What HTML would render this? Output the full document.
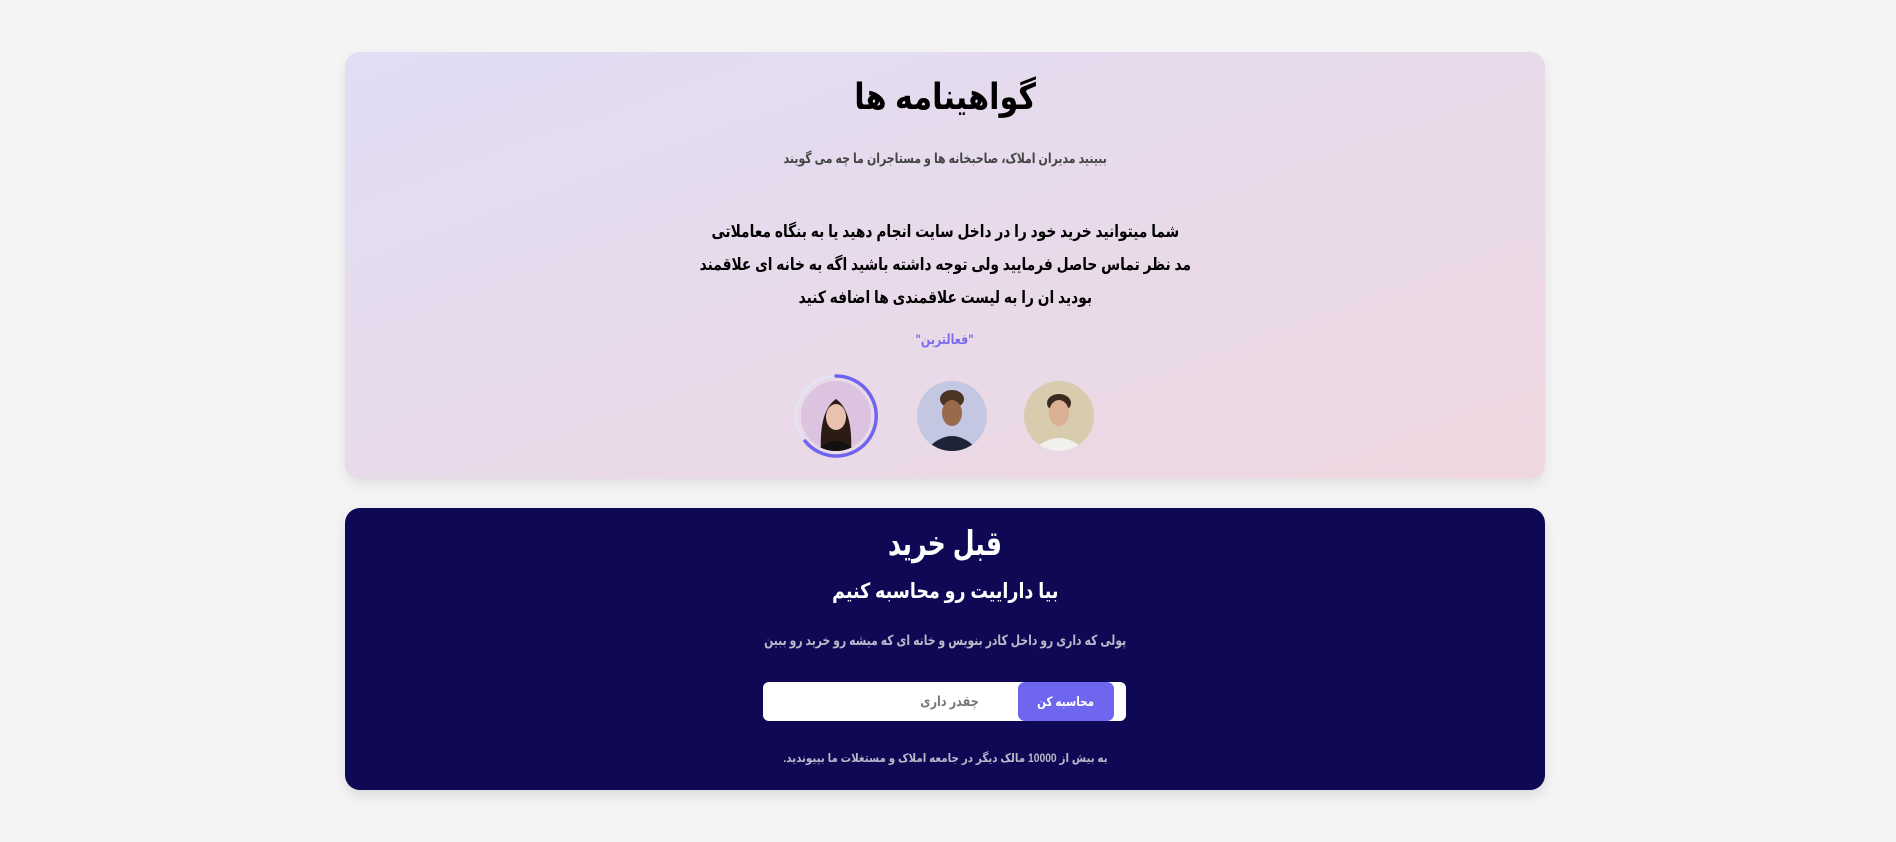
<!DOCTYPE html>
<html lang="fa" dir="rtl"><head><meta charset="utf-8"><style>
*{margin:0;padding:0;box-sizing:border-box}
body{width:1896px;height:842px;background:#f4f4f4;font-family:"Liberation Sans","DejaVu Sans",sans-serif;position:relative;overflow:hidden}
.c{position:absolute;left:345px;width:1200px;border-radius:15px;text-align:center}
.c1{top:52px;height:427px;background:linear-gradient(160deg,#e1ddf4 0%,#e8daea 50%,#eed7e0 100%);box-shadow:0 6px 12px rgba(0,0,0,.08)}
.c2{top:508px;height:282px;background:#0f0854;box-shadow:0 6px 12px rgba(0,0,0,.1)}
.t{position:absolute;left:0;right:0;font-weight:bold;white-space:nowrap}
.t span{display:inline-block}
.av{position:absolute;width:70px;height:70px;border-radius:50%;overflow:hidden}
</style></head><body>
<div class="c c1">
<div class="t" style="top:24px;font-size:36px;color:#000"><span style="transform:scaleX(.84)">گواهینامه ها</span></div>
<div class="t" style="top:98px;font-size:14px;color:#444"><span style="transform:scaleX(.78)">ببینید مدیران املاک، صاحبخانه ها و مستاجران ما چه می گویند</span></div>
<div class="t" style="top:163px;font-size:17px;color:#000;line-height:33px"><span style="transform:scaleX(.81)">شما میتوانید خرید خود را در داخل سایت انجام دهید یا به بنگاه معاملاتی<br>مد نظر تماس حاصل فرمایید ولی توجه داشته باشید اگه به خانه ای علاقمند<br>بودید ان را به لیست علاقمندی ها اضافه کنید</span></div>
<div class="t" style="top:279px;font-size:14px;color:#7b6cf0"><span style="transform:scaleX(.79)">"فعالترین"</span></div>
<svg style="position:absolute;left:448px;top:321px" width="86" height="86" viewBox="0 0 86 86"><circle cx="43" cy="43" r="40" fill="none" stroke="#e6e2f5" stroke-width="3"/><path d="M43 3 A40 40 0 1 1 12 68" fill="none" stroke="#6e64ef" stroke-width="3.5" stroke-linecap="round"/></svg>
<div class="av" style="left:456px;top:329px;background:#dcc3e0"><svg width="70" height="70"><path d="M20 70 Q18 30 35 18 Q52 30 50 70Z" fill="#2a1a14"/><ellipse cx="35" cy="36" rx="10" ry="13" fill="#e8c2ad"/><path d="M15 70 Q35 50 55 70Z" fill="#111"/></svg></div>
<div class="av" style="left:572px;top:329px;background:#c3c7e2"><svg width="70" height="70"><ellipse cx="35" cy="18" rx="12" ry="9" fill="#4a3424"/><ellipse cx="35" cy="32" rx="10" ry="13" fill="#9a6a4c"/><path d="M8 70 Q35 40 62 70Z" fill="#1d2438"/></svg></div>
<div class="av" style="left:679px;top:329px;background:#d8ccae"><svg width="70" height="70"><ellipse cx="35" cy="22" rx="12" ry="9" fill="#3a2a20"/><ellipse cx="35" cy="32" rx="10" ry="13" fill="#dcb094"/><path d="M8 70 Q35 44 62 70Z" fill="#f2f0ee"/></svg></div>
</div>
<div class="c c2">
<div class="t" style="top:16px;font-size:34px;color:#fff"><span style="transform:scaleX(.74)">قبل خرید</span></div>
<div class="t" style="top:71px;font-size:21px;color:#fff"><span style="transform:scaleX(.83)">بیا داراییت رو محاسبه کنیم</span></div>
<div class="t" style="top:124px;font-size:14px;color:#b9b9c9"><span style="transform:scaleX(.77)">پولی که داری رو داخل کادر بنویس و خانه ای که میشه رو خرید رو ببین</span></div>
<div style="position:absolute;left:418px;top:174px;width:363px;height:39px;background:#fff;border-radius:6px">
<div style="position:absolute;right:12px;top:0;width:96px;height:39px;background:#6f66ef;border-radius:7px;color:#fff;font-size:13px;font-weight:bold;line-height:39px"><span style="display:inline-block;transform:scaleX(.8)">محاسبه کن</span></div>
<div style="position:absolute;right:140px;top:0;line-height:39px;font-size:14px;font-weight:bold;color:#777"><span style="display:inline-block;transform:scaleX(.8)">چقدر داری</span></div>
</div>
<div class="t" style="top:243px;font-size:12px;color:#b9b9c9"><span style="transform:scaleX(.86)">به بیش از 10000 مالک دیگر در جامعه املاک و مستغلات ما بپیوندید.</span></div>
</div>
</body></html>
